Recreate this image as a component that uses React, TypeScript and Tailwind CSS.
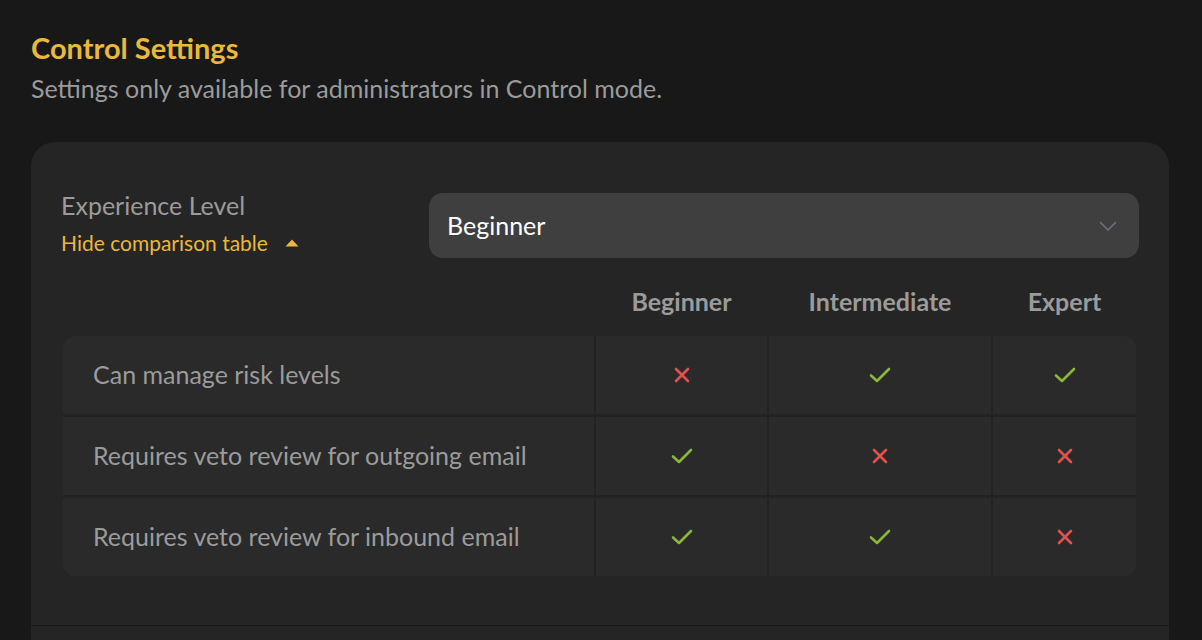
import { useState } from "react";

type Level = "Beginner" | "Intermediate" | "Expert";

const LEVELS: Level[] = ["Beginner", "Intermediate", "Expert"];

const RULES: { label: string; allowed: boolean[] }[] = [
  { label: "Can manage risk levels", allowed: [false, true, true] },
  { label: "Requires veto review for outgoing email", allowed: [true, false, false] },
  { label: "Requires veto review for inbound email", allowed: [true, true, false] },
];

const COLS = "grid grid-cols-[531px_171px_222px_143px] gap-x-[2px]";

function Check() {
  return (
    <svg width="22" height="16" viewBox="0 0 22 16" fill="none">
      <path d="M2 8.5 L8 14 L20 2" stroke="#8bb636" strokeWidth="2.6" strokeLinecap="round" strokeLinejoin="round" />
    </svg>
  );
}

function Cross() {
  return (
    <svg width="16" height="16" viewBox="0 0 16 16" fill="none">
      <path d="M2 2 L14 14 M14 2 L2 14" stroke="#e1524c" strokeWidth="2.6" strokeLinecap="round" />
    </svg>
  );
}

export default function App() {
  const [level] = useState<Level>("Beginner");
  const [showTable, setShowTable] = useState(true);

  return (
    <div className="min-h-[640px] bg-[#181818] px-[31px] pt-[31px] font-['Lato',sans-serif] overflow-hidden">
      <h2 className="text-[29px] font-bold leading-[34px] text-[#e8b93b]">Control Settings</h2>
      <p className="mt-[8px] text-[25px] leading-[30px] text-[#9b9b9b]">
        Settings only available for administrators in Control mode.
      </p>

      <div className="mt-[39px] w-[1138px] rounded-t-[24px] bg-[#252525]">
        <div className="px-[30px] pt-[48px] pb-[49px]">
          {/* level picker */}
          <div className="flex items-start justify-between">
            <div>
              <div className="text-[25px] leading-[30px] text-[#9b9b9b]">Experience Level</div>
              <button
                onClick={() => setShowTable((v) => !v)}
                className="mt-[10px] flex items-center gap-[17px] text-[21px] leading-[26px] text-[#e8b93b]"
              >
                Hide comparison table
                <svg width="14" height="8" viewBox="0 0 14 8">
                  <path d="M7 0.5 L13.5 7.5 H0.5 Z" fill="#e8b93b" />
                </svg>
              </button>
            </div>
            <div className="mt-[3px] flex h-[65px] w-[710px] items-center justify-between rounded-[14px] bg-[#3f3f3f] pl-[18px] pr-[22px]">
              <span className="text-[25px] text-white">{level}</span>
              <svg width="18" height="10" viewBox="0 0 18 10" fill="none">
                <path d="M1 1 L9 9 L17 1" stroke="#6b7282" strokeWidth="1.5" />
              </svg>
            </div>
          </div>

          {showTable && (
            <div className="mt-[28px] pl-[2px]">
              <div className={`${COLS} mb-[20px]`}>
                <div />
                {LEVELS.map((l) => (
                  <div key={l} className="text-center text-[25px] font-bold leading-[30px] text-[#9b9b9b]">
                    {l}
                  </div>
                ))}
              </div>

              <div className={`${COLS} gap-y-[3px] overflow-hidden rounded-[12px] bg-[#222222] w-[1073px]`}>
                {RULES.map((r) => (
                  <>
                    <div key={r.label} className="flex h-[78px] items-center bg-[#2a2a2a] pl-[30px] text-[25px] text-[#9b9b9b]">
                      {r.label}
                    </div>
                    {r.allowed.map((ok, i) => (
                      <div key={r.label + i} className="flex h-[78px] items-center justify-center bg-[#2a2a2a]">
                        {ok ? <Check /> : <Cross />}
                      </div>
                    ))}
                  </>
                ))}
              </div>
            </div>
          )}
        </div>
        <div className="h-px bg-[#181818]" />
        <div className="h-[40px]" />
      </div>
    </div>
  );
}
